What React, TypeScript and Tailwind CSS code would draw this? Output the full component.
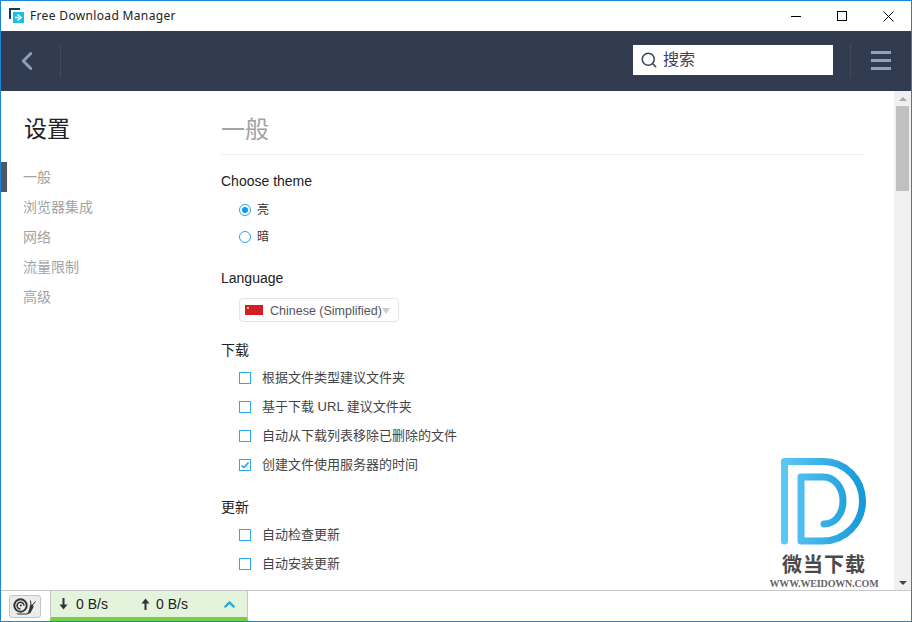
import { ChevronLeft, ChevronUp, Search } from "lucide-react";

const SANS = "font-['Liberation_Sans','Noto_Sans_CJK_SC',sans-serif]";

const navItems = ["一般", "浏览器集成", "网络", "流量限制", "高级"];

function Radio({ label, checked }: { label: string; checked?: boolean }) {
  return (
    <div className="flex h-[27px] items-center pl-[18px]">
      <span className="flex h-[12px] w-[12px] items-center justify-center rounded-full border border-[#22a7f0]">
        {checked && <span className="h-[6px] w-[6px] rounded-full bg-[#0d9bf0]" />}
      </span>
      <span className="ml-[6px] text-[12px] text-[#333]">{label}</span>
    </div>
  );
}

function Check({ label, checked }: { label: string; checked?: boolean }) {
  return (
    <div className="flex h-[29px] items-center pl-[18px]">
      <span className="flex h-[12px] w-[12px] items-center justify-center border border-[#2aa9ee]">
        {checked && (
          <svg width="10" height="10" viewBox="0 0 10 10" fill="none">
            <path d="M1.5 5.5 L4 7.5 L8.5 2.5" stroke="#1c9be8" strokeWidth="1.6" />
          </svg>
        )}
      </span>
      <span className="ml-[11px] text-[13px] text-[#444]">{label}</span>
    </div>
  );
}

function Snail() {
  return (
    <svg width="24" height="17" viewBox="0 0 24 17" fill="none">
      {/* shell spiral */}
      <circle cx="7.5" cy="7.5" r="6.2" stroke="#333" strokeWidth="2" />
      <path d="M7.5 11 a3.4 3.4 0 1 1 3.4 -3.4" stroke="#333" strokeWidth="1.6" />
      <circle cx="7.8" cy="7.6" r="1" fill="#333" />
      {/* body */}
      <path d="M3 15.5 H14 C16 14 16.5 10 17 7 L20 6.5 L20.5 9 L17.5 15 L14 16.5 H5 Z" fill="#333" />
      <path d="M18 7 L17.5 2.5 M19.5 7 L22.5 3.5" stroke="#333" strokeWidth="1" />
    </svg>
  );
}

function SpeedArrow({ up }: { up?: boolean }) {
  return (
    <svg width="9" height="12" viewBox="0 0 9 12" fill="none" className={up ? "" : "rotate-180"}>
      <path d="M4.5 12 V2" stroke="#333" strokeWidth="2" />
      <path d="M0.5 5.5 L4.5 0.5 L8.5 5.5 Z" fill="#333" />
    </svg>
  );
}

function Watermark() {
  return (
    <div className="absolute left-[767px] top-[457px] flex w-[112px] flex-col items-center">
      <svg width="88" height="88" viewBox="0 0 88 88" fill="none" className="ml-[12px] self-start">
        <defs>
          <linearGradient id="wd" x1="0" x2="1" y1="0" y2="0">
            <stop offset="0" stopColor="#5cc6f4" />
            <stop offset="1" stopColor="#169ad9" />
          </linearGradient>
        </defs>
        <path
          d="M4.5 83 V3.5 H43 C65 3.5 82.5 21 82.5 43 C82.5 65 65 83 43 83 H21 V19 H43 C55 19 63 30 63 43 C63 56 55 66 44 66"
          stroke="url(#wd)"
          strokeWidth="7"
          strokeLinecap="round"
          strokeLinejoin="round"
        />
      </svg>
      <div className="mt-[6px] text-[20px] font-bold leading-[24px] tracking-[1px] text-[#4a4a4a] font-['Noto_Sans_CJK_SC',sans-serif]">
        微当下载
      </div>
      <div className="mt-[2px] whitespace-nowrap text-[10px] font-bold leading-[12px] tracking-[-0.15px] text-[#666] font-['Liberation_Serif',serif]">
        WWW.WEIDOWN.COM
      </div>
    </div>
  );
}

export default function App() {
  return (
    <div className={`relative flex h-[622px] w-[912px] flex-col overflow-hidden border border-[#1b86d6] bg-white ${SANS}`}>
      {/* Title bar */}
      <div className="flex h-[30px] shrink-0 items-center pl-[8px]">
        <svg width="16" height="16" viewBox="0 0 16 16" fill="none">
          <path d="M1 11 V1 H11" stroke="#123f5c" strokeWidth="2" />
          <rect x="4" y="4" width="11" height="11" fill="#18c0e4" />
          <path d="M6 9.5 H10 M8.5 6.5 L12 9.5 L8.5 12.5" stroke="#fff" strokeWidth="1.6" />
        </svg>
        <span className="ml-[5px] text-[12px] tracking-[0.34px] text-[#222] font-['Noto_Sans','Noto_Sans_CJK_SC',sans-serif]">
          Free Download Manager
        </span>
        <div className="ml-auto flex h-full items-center">
          <div className="flex w-[46px] justify-center">
            <span className="h-px w-[10px] bg-black" />
          </div>
          <div className="flex w-[46px] justify-center">
            <span className="h-[10px] w-[10px] border border-black" />
          </div>
          <div className="flex w-[46px] justify-center">
            <svg width="11" height="11" viewBox="0 0 11 11" fill="none">
              <path d="M0.5 0.5 L10.5 10.5 M10.5 0.5 L0.5 10.5" stroke="#000" />
            </svg>
          </div>
        </div>
      </div>

      {/* Toolbar */}
      <div className="flex h-[60px] shrink-0 items-center bg-[#323c50]">
        <div className="mb-[1px] flex h-[34px] w-[60px] items-center justify-center border-r border-[#414b5f]">
          <ChevronLeft size={30} strokeWidth={2.4} className="mr-[7px] text-[#8e9fbb]" />
        </div>
        <div className="mb-[2px] ml-auto flex h-[30px] w-[200px] items-center bg-white pl-[7px]">
          <Search size={18} strokeWidth={2} className="text-[#3a4356]" />
          <span className="ml-[5px] text-[16px] text-[#3a4356]">搜索</span>
        </div>
        <div className="mb-[1px] ml-[17px] mr-[1px] flex h-[34px] w-[60px] items-center justify-center border-l border-[#414b5f]">
          <div className="flex w-[20px] flex-col gap-[5px]">
            <span className="h-[3px] bg-[#8fa2c2]" />
            <span className="h-[3px] bg-[#8fa2c2]" />
            <span className="h-[3px] bg-[#8fa2c2]" />
          </div>
        </div>
      </div>

      {/* Body */}
      <div className="flex min-h-0 flex-1">
        <aside className="w-[220px] shrink-0 pt-[22px]">
          <h1 className="pl-[23px] text-[23px] font-normal leading-[32px] text-[#222]">设置</h1>
          <nav className="mt-[17px]">
            {navItems.map((item, i) => (
              <div key={item} className="relative h-[30px] pl-[22px] text-[14px] leading-[30px] text-[#a3a3a3]">
                {i === 0 && <span className="absolute left-0 top-0 h-full w-[6px] bg-[#4b586b]" />}
                {item}
              </div>
            ))}
          </nav>
        </aside>

        <main className="min-w-0 flex-1 overflow-hidden pt-[22px] text-[14px] text-[#222]">
          <div className="h-[42px] border-b border-[#eee] pt-[1px] text-[24px] leading-[32px] text-[#a3a3a3]">一般</div>
          <div className="mt-[17px] h-[18px] leading-[18px]">Choose theme</div>
          <div className="mt-[6px]">
            <Radio label="亮" checked />
            <Radio label="暗" />
          </div>
          <div className="mt-[19px] h-[18px] leading-[18px]">Language</div>
          <div className="ml-[18px] mt-[11px] flex h-[24px] w-[160px] items-center rounded-[4px] border border-[#e4e4e4] pl-[5px]">
            <svg width="18" height="10" viewBox="0 0 18 10">
              <rect width="18" height="10" fill="#d21f26" />
              <rect x="2" y="2" width="2" height="2" fill="#f5d020" />
            </svg>
            <span className="ml-[7px] mt-[2px] whitespace-nowrap text-[12.5px] text-[#555]">Chinese (Simplified)</span>
            <span className="mt-[2px] h-0 w-0 border-x-[4px] border-t-[6px] border-x-transparent border-t-[#ccc]" />
          </div>
          <div className="mt-[19px] h-[18px] leading-[18px]">下载</div>
          <div className="mt-[4px]">
            <Check label="根据文件类型建议文件夹" />
            <Check label="基于下载 URL 建议文件夹" />
            <Check label="自动从下载列表移除已删除的文件" />
            <Check label="创建文件使用服务器的时间" checked />
          </div>
          <div className="mt-[19px] h-[18px] leading-[18px]">更新</div>
          <div className="mt-[4px]">
            <Check label="自动检查更新" />
            <Check label="自动安装更新" />
          </div>
        </main>

        <div className="ml-[30px] flex w-[17px] shrink-0 flex-col items-center bg-[#f0f0f0]">
          <span className="mt-[6px] h-0 w-0 border-x-[4px] border-b-[4px] border-x-transparent border-b-[#a8a8a8]" />
          <span className="mt-[5px] h-[85px] w-[13px] bg-[#c0c0c0]" />
          <span className="mb-[5px] mt-auto h-0 w-0 border-x-[4px] border-t-[4px] border-x-transparent border-t-[#444]" />
        </div>
      </div>

      {/* Status bar */}
      <div className="flex h-[31px] shrink-0 border-t border-[#c8c8c8]">
        <div className="flex w-[49px] items-center pl-[8px]">
          <div className="flex h-[23px] w-[32px] items-center justify-center rounded-[3px] border border-[#c4c4c4] bg-[#ececec]">
            <Snail />
          </div>
        </div>
        <div className="flex w-[198px] items-center border-x border-[#c8c8c8] border-b-[4px] border-b-[#76cf4a] bg-[#e4f4dc] pl-[8px] text-[14px] text-[#222]">
          <SpeedArrow />
          <span className="ml-[8px] w-[65px]">0 B/s</span>
          <SpeedArrow up />
          <span className="ml-[6px]">0 B/s</span>
          <ChevronUp size={17} strokeWidth={3} className="ml-auto mr-[9px] text-[#27a9dc]" />
        </div>
      </div>

      <Watermark />
    </div>
  );
}
